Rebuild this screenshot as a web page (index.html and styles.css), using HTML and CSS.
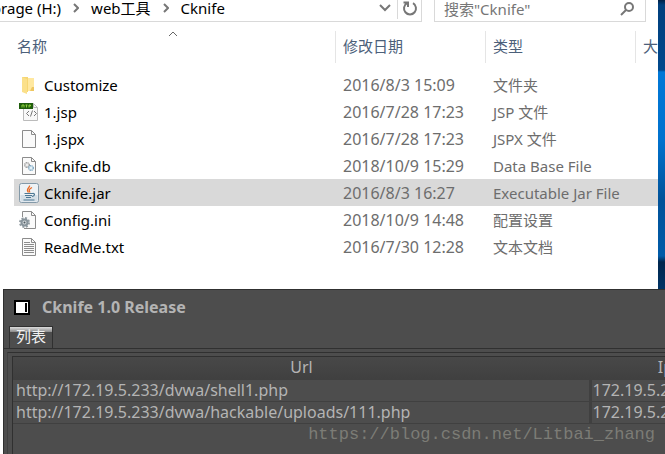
FILE: index.html
```html
<!DOCTYPE html>
<html lang="zh">
<head>
    <meta charset="UTF-8">
    <meta name="viewport" content="width=device-width, initial-scale=1.0">
    <title>Cknife</title>
    <link rel="stylesheet" href="styles.css">
</head>
<body>
    <div class="desktop">
        <div class="explorer">
            <!-- 地址栏和搜索框 -->
            <div class="toolbar">
                <nav class="address">
                    <a href="#" class="crumb-root">orage (H:)</a>
                    <svg class="sep" width="6" height="10" viewBox="0 0 6 10"><path d="M1 1l4 4-4 4"/></svg>
                    <a href="#">web工具</a>
                    <svg class="sep" width="6" height="10" viewBox="0 0 6 10"><path d="M1 1l4 4-4 4"/></svg>
                    <a href="#">Cknife</a>
                    <button class="tool history" aria-label="历史记录">
                        <svg width="12" height="8" viewBox="0 0 12 8"><path d="M1 1l5 5 5-5"/></svg>
                    </button>
                    <button class="tool refresh" aria-label="刷新">
                        <svg width="16" height="16" viewBox="0 0 16 16"><path d="M11 3.2A6 6 0 1 1 5 3.2M1.5 2.5H6V7"/></svg>
                    </button>
                </nav>
                <div class="search">
                    <input type="text" aria-label="搜索" placeholder='搜索"Cknife"'>
                    <svg width="16" height="16" viewBox="0 0 16 16"><circle cx="10" cy="6" r="4"/><path d="M7 9l-5 5"/></svg>
                </div>
            </div>

            <!-- 文件列表 -->
            <table class="files">
                <colgroup>
                    <col>
                    <col class="col-date">
                    <col class="col-type">
                    <col class="col-size">
                </colgroup>
                <thead>
                    <tr>
                        <th class="sorted"><div class="head">名称</div><svg class="sort" width="10" height="6" viewBox="0 0 10 6"><path d="M1 5l4-4 4 4"/></svg></th>
                        <th><div class="head">修改日期</div></th>
                        <th><div class="head">类型</div></th>
                        <th><div class="head">大小</div></th>
                    </tr>
                </thead>
                <tbody>
                    <tr>
                        <td><div class="name">
                            <svg width="20" height="20" viewBox="0 0 20 20"><path d="M3 2h6v15H3z" fill="#f6d673"/><path d="M9 3h6v13H9z" fill="#ffe8a0"/><path d="M3 2l5 2v15l-5-2z" fill="#fbe08a"/><path d="M13 12h2v4h-4z" fill="#eec660"/></svg>
                            Customize</div></td>
                        <td class="date">2016/8/3 15:09</td>
                        <td>文件夹</td>
                        <td></td>
                    </tr>
                    <tr>
                        <td><div class="name">
                            <svg width="20" height="20" viewBox="0 0 20 20"><path d="M4.500 1.500h10l4 4v13h-14z" fill="#f8f8f8" stroke="#bbb"/><path d="M14.500 1.500v4h4" fill="none" stroke="#bbb"/><path d="M0 1h14v6H0z" fill="#1f5d0c"/><path d="M3 5.500V3h2v2.500M6.500 3h2M7.500 3v2.500M10 5.500V3h1.500v1H10" fill="none" stroke="#8fd43c"/><path d="M10 9l-2.500 2.500L10 14M15 9l2.500 2.500L15 14M13.500 8.500l-2 6" fill="none" stroke="#777"/></svg>
                            1.jsp</div></td>
                        <td class="date">2016/7/28 17:23</td>
                        <td>JSP 文件</td>
                        <td></td>
                    </tr>
                    <tr>
                        <td><div class="name">
                            <svg width="20" height="20" viewBox="0 0 20 20"><path d="M3.500 1.500h9l4 4v13h-13z" fill="#fafafa" stroke="#8c8c8c"/><path d="M12.500 1.500v4h4" fill="none" stroke="#8c8c8c"/></svg>
                            1.jspx</div></td>
                        <td class="date">2016/7/28 17:23</td>
                        <td>JSPX 文件</td>
                        <td></td>
                    </tr>
                    <tr>
                        <td><div class="name">
                            <svg width="20" height="20" viewBox="0 0 20 20"><path d="M3.500 1.500h9l4 4v13h-13z" fill="#fafafa" stroke="#8c8c8c"/><path d="M12.500 1.500v4h4" fill="none" stroke="#8c8c8c"/><circle cx="8" cy="9" r="2.300" fill="#eee" stroke="#8b8b8b" stroke-width="1.200" stroke-dasharray="1.200 .5"/><circle cx="12" cy="12" r="2.300" fill="#e4f1f8" stroke="#6b9ab8" stroke-width="1.200" stroke-dasharray="1.200 .5"/></svg>
                            Cknife.db</div></td>
                        <td class="date">2018/10/9 15:29</td>
                        <td>Data Base File</td>
                        <td></td>
                    </tr>
                    <tr class="selected">
                        <td><div class="name">
                            <svg width="20" height="20" viewBox="0 0 20 20"><rect x=".5" y=".5" width="19" height="19" rx="2" fill="#eef2f5" stroke="#8399a8"/><path d="M1.500 12h17v6.500h-17z" fill="#d5dfe6"/><path d="M10.500 2.500c1 2-4.500 3.500-1 7M13 4.500c-3 1.500-3.500 2.500-2 5" fill="none" stroke="#ea6a24" stroke-width="1.300"/><path d="M5.500 10.500h8M6 12.500h7M7 14.500h5M4.500 17h11M13.500 10.500c3-.5 2.500 2.500-.5 3" fill="none" stroke="#4c7894" stroke-width="1.200"/></svg>
                            Cknife.jar</div></td>
                        <td class="date">2016/8/3 16:27</td>
                        <td>Executable Jar File</td>
                        <td></td>
                    </tr>
                    <tr>
                        <td><div class="name">
                            <svg width="20" height="20" viewBox="0 0 20 20"><path d="M3.500 1.500h9l4 4v13h-13z" fill="#fafafa" stroke="#8c8c8c"/><path d="M12.500 1.500v4h4" fill="none" stroke="#8c8c8c"/><path d="M0 7h5v13H0z" fill="#fff"/><circle cx="5.500" cy="12.500" r="4.500" fill="none" stroke="#929ca2" stroke-width="2" stroke-dasharray="2 1.530"/><circle cx="5.500" cy="12.500" r="3" fill="#d4d9dc" stroke="#87939b" stroke-width="2"/><circle cx="5.500" cy="12.500" r="1" fill="#4e5a61"/></svg>
                            Config.ini</div></td>
                        <td class="date">2018/10/9 14:48</td>
                        <td>配置设置</td>
                        <td></td>
                    </tr>
                    <tr>
                        <td><div class="name">
                            <svg width="20" height="20" viewBox="0 0 20 20"><path d="M3.500 1.500h9l4 4v13h-13z" fill="#fafafa" stroke="#8c8c8c"/><path d="M12.500 1.500v4h4M5 5.500h6M5 7.500h10M5 9.500h10M5 11.500h10M5 13.500h10M5 15.500h10" fill="none" stroke="#8c8c8c"/></svg>
                            ReadMe.txt</div></td>
                        <td class="date">2016/7/30 12:28</td>
                        <td>文本文档</td>
                        <td></td>
                    </tr>
                </tbody>
            </table>
        </div>
    </div>

    <!-- Cknife 主窗口 -->
    <div class="app">
        <div class="titlebar">
            <svg width="16" height="15" viewBox="0 0 16 15"><path d="M0 0h16v15H0z" fill="#000"/><path d="M2 2h12v11H2z" fill="#fff"/><path d="M11 3h2v9h-2z" fill="#000"/></svg>
            <h1>Cknife 1.0 Release</h1>
        </div>
        <div class="tabs">
            <button class="tab">列表</button>
        </div>
        <div class="panel">
            <div class="grid-wrap">
                <table class="shells">
                    <colgroup>
                        <col>
                        <col class="col-ip">
                    </colgroup>
                    <thead>
                        <tr><th>Url</th><th>Ip</th></tr>
                    </thead>
                    <tbody>
                        <tr><td>http://172.19.5.233/dvwa/shell1.php</td><td>172.19.5.233</td></tr>
                        <tr><td>http://172.19.5.233/dvwa/hackable/uploads/111.php</td><td>172.19.5.233</td></tr>
                    </tbody>
                </table>
            </div>
        </div>
        <div class="watermark">https://blog.csdn.net/Litbai_zhang</div>
    </div>
</body>
</html>
```

FILE: styles.css
```css
* {
    box-sizing: border-box;
}
body {
    margin: 0;
    min-height: 100vh;
    display: flex;
    flex-direction: column;
    overflow: hidden;
    background: #fff;
    font-family: "Noto Sans", "Noto Sans CJK SC", sans-serif;
    font-size: 15px;
    line-height: 22px;
}
svg {
    flex: none;
}
button {
    font: inherit;
    border: none;
    background: none;
    padding: 0;
}

/* 资源管理器 */
.desktop {
    padding-right: 7px;
    background: linear-gradient(to bottom, #001f45 0, #003f7d 5px, #00488c 70px, #0078d7 72px, #0072ce 140px, #005299 200px, #005ba8 256px, #00264d 262px, #003466 100%);
}
.explorer {
    background: #fff;
    padding-bottom: 29px;
}
.toolbar {
    display: flex;
    gap: 12px;
    height: 22px;
    padding-right: 12px;
    line-height: 16px;
}
.address {
    flex: 1;
    display: flex;
    align-items: center;
    overflow: hidden;
    border: 1px solid #d9d9d9;
    border-width: 0 1px 1px 0;
    padding-bottom: 6px;
}
.address a {
    color: #000;
    text-decoration: none;
    white-space: nowrap;
}
.crumb-root {
    margin-left: -8px;
}
.sep {
    margin: 0 12px;
}
.sep, .tool svg, .search svg {
    fill: none;
    stroke: #777;
    stroke-width: 2;
}
.tool {
    height: 22px;
    width: 24px;
    display: flex;
    align-items: center;
    justify-content: center;
}
.history {
    margin-left: auto;
}
.refresh {
    border-left: 1px solid #d9d9d9;
}
.search {
    width: 212px;
    display: flex;
    align-items: center;
    border: 1px solid #d9d9d9;
    border-top: none;
    padding: 0 10px 4px 9px;
}
.search input {
    flex: 1;
    min-width: 0;
    border: none;
    padding: 0;
    font: inherit;
    background: none;
    outline: none;
}
.search input::placeholder {
    color: #767676;
    opacity: 1;
}
.files {
    width: calc(100% - 14px);
    margin-left: 14px;
    border-collapse: collapse;
    table-layout: fixed;
    color: #6d6d6d;
}
.col-date, .col-type {
    width: 150px;
}
.col-size {
    width: 23px;
}
.files th {
    position: relative;
    height: 49px;
    padding: 0;
    font-weight: normal;
    text-align: left;
    color: #4c607a;
    overflow: hidden;
    white-space: nowrap;
}
.head {
    height: 32px;
    line-height: 31px;
    padding-left: 7px;
    border-left: 1px solid #e5e5e5;
}
.sorted .head {
    padding-left: 3px;
    border-left: none;
}
.sort {
    position: absolute;
    top: 9px;
    left: 50%;
    margin-left: -7px;
    fill: none;
    stroke: #666;
}
.files td {
    height: 27px;
    padding: 0 0 0 8px;
    white-space: nowrap;
}
.files td:first-child {
    padding-left: 5px;
    color: #000;
}
.files .date {
    font-size: 16px;
}
.name {
    display: flex;
    align-items: center;
    gap: 5px;
}
.selected {
    background: #d9d9d9;
}

/* Cknife 窗口 */
.app {
    position: relative;
    flex: 1;
    margin-left: 3px;
    display: flex;
    flex-direction: column;
    background: #4d4d4d;
    border-top: 1px solid #303030;
    border-left: 1px solid #303030;
    color: #b4b4b4;
}
.titlebar {
    display: flex;
    align-items: center;
    gap: 12px;
    height: 36px;
    padding: 0 0 2px 10px;
}
.titlebar h1 {
    margin: 0;
    font-size: 16px;
}
.tabs {
    padding-left: 5px;
    border-bottom: 1px solid #303030;
}
.tab {
    display: block;
    height: 22px;
    padding: 0 6px 2px;
    border: 1px solid #303030;
    border-bottom: none;
    background: linear-gradient(to bottom, #dcdcdc 0, #8a8a8a 5px, #4d4d4d 5px);
    color: #f0f0f0;
    line-height: 19px;
}
.panel {
    flex: 1;
    display: flex;
    margin: 3px 0 0 3px;
    padding: 3px 0 0 4px;
    border-top: 1px solid #303030;
    border-left: 1px solid #404040;
}
.grid-wrap {
    flex: 1;
    overflow: hidden;
    border-top: 1px solid #303030;
    border-left: 1px solid #303030;
}
.shells {
    width: calc(100% + 76px);
    border-collapse: collapse;
    table-layout: fixed;
    font-size: 16px;
}
.col-ip {
    width: 151px;
}
.shells th, .shells td {
    height: 22px;
    padding: 0 3px 1px;
    border-bottom: 1px solid #404040;
    white-space: nowrap;
    line-height: 20px;
}
.shells th {
    background: linear-gradient(to bottom, #484848, #404040);
    font-weight: normal;
}
.shells td + td {
    border-left: 3px solid #404040;
    padding-left: 1px;
}
.watermark {
    position: absolute;
    right: 10px;
    bottom: 8px;
    font-family: "Liberation Mono", monospace;
    font-size: 17px;
    color: #7c7c76;
    pointer-events: none;
}
```
